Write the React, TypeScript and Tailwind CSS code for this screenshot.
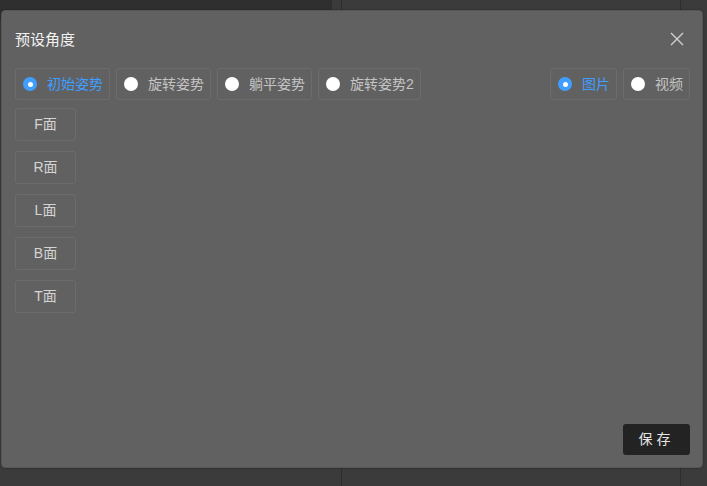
import React from "react";

const font = { fontFamily: '"Liberation Sans", "Noto Sans CJK SC", sans-serif' };

function Radio({ label, checked }: { label: string; checked?: boolean }) {
  return (
    <div className="flex h-[32px] items-center rounded-[3px] border border-[#6c6c6c] pl-[7px] pr-[6px]">
      {checked ? (
        <span className="flex h-[14px] w-[14px] items-center justify-center rounded-full bg-[#409eff]">
          <span className="h-[5px] w-[5px] rounded-full bg-white" />
        </span>
      ) : (
        <span className="h-[14px] w-[14px] rounded-full bg-white" />
      )}
      <span className={`ml-[10px] text-[14px] leading-none ${checked ? "text-[#409eff]" : "text-[#c4c4c4]"}`}>{label}</span>
    </div>
  );
}

function Face({ label }: { label: string }) {
  return (
    <div className="flex h-[33px] w-[61px] items-center justify-center rounded-[3px] border border-[#6c6c6c] text-[14px] text-[#d4d4d4]">
      {label}
    </div>
  );
}

export default function App() {
  return (
    <div className="relative h-[486px] w-[707px] overflow-hidden bg-[#3b3b3b]" style={font}>
      <div className="flex h-full">
        <div className="h-[20px] w-[332px] rounded-br-[6px] bg-[#2f2f2f]" />
        <div className="ml-[9px] h-full w-[1px] bg-[#2e2e2e]" />
        <div className="ml-[338px] h-full w-[1px] bg-[#2e2e2e]" />
      </div>
      <div className="absolute left-[1px] top-[10px] flex h-[458px] w-[702px] flex-col rounded-[4px] border border-[#565656] bg-[#616161] pb-[12px] pl-[13px] pr-[12px] shadow-[0_0_2px_rgba(0,0,0,0.4)]">
        <div className="flex h-[57px] items-start justify-between pt-[19px]">
          <span className="text-[15px] leading-[20px] text-[#f2f2f2]">预设角度</span>
          <svg width="16" height="16" viewBox="0 0 16 16" className="mr-[5px] mt-[1px]">
            <path d="M2 2 L14 14 M14 2 L2 14" stroke="#d0d0d0" strokeWidth="1.4" />
          </svg>
        </div>
        <div className="flex items-center justify-between">
          <div className="flex gap-[6px]">
            <Radio label="初始姿势" checked />
            <Radio label="旋转姿势" />
            <Radio label="躺平姿势" />
            <Radio label="旋转姿势2" />
          </div>
          <div className="flex gap-[6px]">
            <Radio label="图片" checked />
            <Radio label="视频" />
          </div>
        </div>
        <div className="mt-[8px] flex flex-col gap-[10px]">
          <Face label="F面" />
          <Face label="R面" />
          <Face label="L面" />
          <Face label="B面" />
          <Face label="T面" />
        </div>
        <div className="mt-auto flex justify-end">
          <button className="h-[31px] w-[67px] rounded-[3px] bg-[#232323] text-[14px] tracking-[4px] text-[#e6e6e6]">保存</button>
        </div>
      </div>
    </div>
  );
}
